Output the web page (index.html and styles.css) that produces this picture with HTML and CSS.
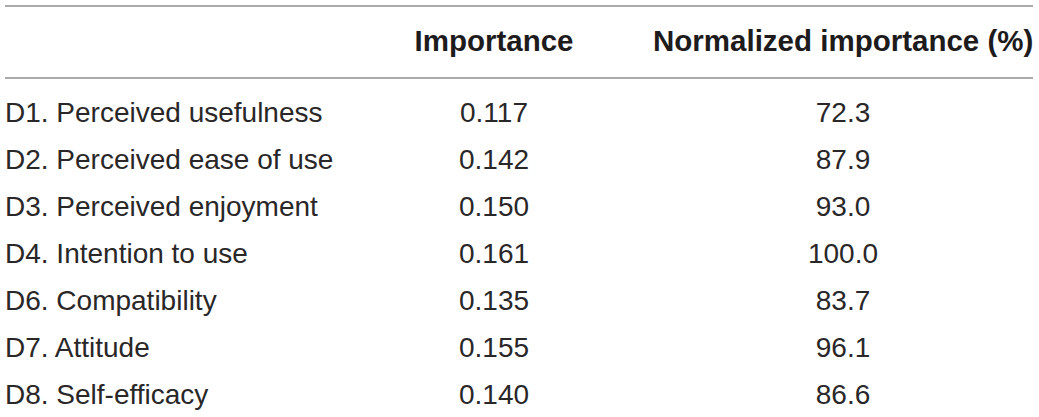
FILE: index.html
```html
<!DOCTYPE html>
<html>
<head>
<meta charset="utf-8">
<link rel="stylesheet" href="styles.css">
</head>
<body>
<div class="wrap">
<table class="data">
<colgroup>
<col class="c1"><col class="c2"><col class="c3">
</colgroup>
<thead>
<tr><th class="lab"></th><th>Importance</th><th>Normalized importance (%)</th></tr>
</thead>
<tbody>
<tr class="first"><td class="lab">D1. Perceived usefulness</td><td>0.117</td><td>72.3</td></tr>
<tr><td class="lab">D2. Perceived ease of use</td><td>0.142</td><td>87.9</td></tr>
<tr><td class="lab">D3. Perceived enjoyment</td><td>0.150</td><td>93.0</td></tr>
<tr><td class="lab">D4. Intention to use</td><td>0.161</td><td>100.0</td></tr>
<tr><td class="lab">D6. Compatibility</td><td>0.135</td><td>83.7</td></tr>
<tr><td class="lab">D7. Attitude</td><td>0.155</td><td>96.1</td></tr>
<tr><td class="lab">D8. Self-efficacy</td><td>0.140</td><td>86.6</td></tr>
</tbody>
</table>
</div>
</body>
</html>
```

FILE: styles.css
```css
html, body {
  margin: 0;
  padding: 0;
  background: #ffffff;
}
.wrap {
  padding: 5px 6px 0 5px;
}
.data {
  width: 1028px;
  border-collapse: collapse;
  table-layout: fixed;
  font-family: "Liberation Sans", Arial, sans-serif;
  font-size: 28px;
  color: #2a2728;
  border-top: 2px solid #ababab;
}
.c1 { width: 330px; }
.c2 { width: 318px; }
.c3 { width: 380px; }
.data th {
  font-weight: bold;
  font-size: 29.5px;
  color: #1e1b1c;
  height: 72px;
  padding: 0 0 2px 0;
  box-sizing: border-box;
  text-align: center;
  vertical-align: middle;
  white-space: nowrap;
  border-bottom: 2px solid #ababab;
  line-height: 32px;
}
.data td {
  padding: 0;
  line-height: 47px;
  text-align: center;
  white-space: nowrap;
}
.data .lab {
  text-align: left;
}
.data tr.first td {
  padding-top: 10px;
}
```
